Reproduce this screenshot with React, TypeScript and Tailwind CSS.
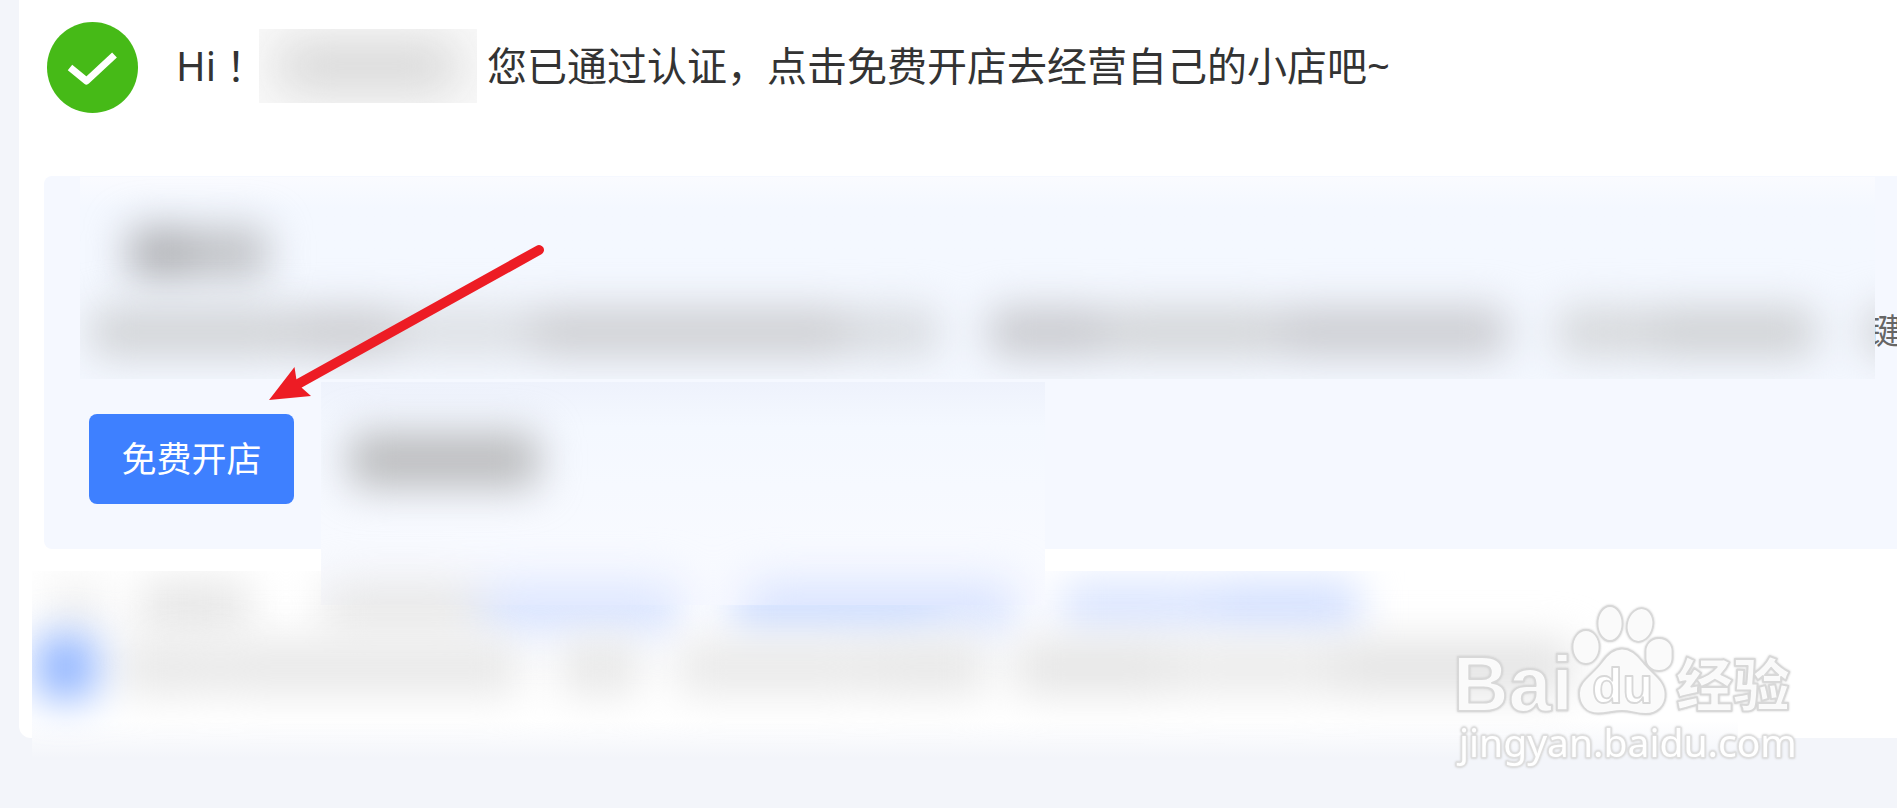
import React from 'react';

const Smudge = ({ className }: { className: string }) => (
  <span className={`block shrink-0 rounded-xl ${className}`} />
);

const SuccessIcon = () => (
  <svg viewBox="0 0 91 91" className="h-[91px] w-[91px] shrink-0" aria-hidden="true">
    <circle cx="45.5" cy="45.5" r="45.5" fill="#46ba17" />
    <path d="M23 45.500L39.500 59L67.500 33" fill="none" stroke="#fff" strokeWidth="7" strokeLinejoin="round" />
  </svg>
);

const Arrow = () => (
  <svg
    viewBox="0 0 290 170"
    className="pointer-events-none absolute left-[216px] top-16 z-20 h-[170px] w-[290px]"
    aria-hidden="true"
  >
    <path d="M279 10L38 144" stroke="#ed1c24" strokeWidth="10" strokeLinecap="round" />
    <path d="M9 160L34.500 127L36.500 140L42 148L51 156Z" fill="#ed1c24" />
  </svg>
);

const Watermark = () => (
  <svg
    viewBox="0 0 350 170"
    className="pointer-events-none absolute right-[97px] top-[600px] z-30 h-[170px] w-[350px] drop-shadow-[0_0_1px_#ccc]"
    fill="#fff"
    fillOpacity="0.9"
    stroke="#d8d8d8"
    strokeWidth="1.8"
    strokeLinejoin="round"
  >
    <text x="3" y="111" fontSize="77" fontWeight="700" fontFamily="'Liberation Sans', sans-serif">
      Bai
    </text>
    <ellipse cx="136" cy="47" rx="13.5" ry="17" />
    <ellipse cx="160" cy="23.500" rx="12.500" ry="17.500" />
    <ellipse cx="190" cy="25" rx="13" ry="17" transform="rotate(14 190 25)" />
    <rect x="195.500" y="38" width="27" height="33" rx="13" />
    <path d="M172 48.500C181 48.500 187 54 193 62C201 73 215 79 215.500 94C216 106 207 114 196 114C186 114 181 111 172 111C163 111 157 113.500 148 113.500C136 113.500 129 105 129 93C129 81 142 75 151 63C157 54 163 48.500 172 48.500Z" />
    <text x="142" y="103" fontSize="50" fontWeight="700" fontFamily="'Liberation Sans', sans-serif">
      du
    </text>
    <text x="226" y="106" fontSize="57" fontWeight="900" fontFamily="'Noto Sans CJK SC', sans-serif">
      经验
    </text>
    <g stroke="#dedede" strokeWidth="3" paintOrder="stroke" fillOpacity="1">
      <text x="9" y="157" fontSize="39" fontFamily="'Noto Sans', sans-serif">
        jingyan.baidu.com
      </text>
    </g>
  </svg>
);

export default function App() {
  return (
    <main className="relative min-h-screen overflow-hidden bg-[#f3f5fa] pl-[19px] font-['Noto_Sans','Noto_Sans_CJK_SC',sans-serif]">
      <section className="flow-root rounded-bl-xl bg-white">
        <header className="flex items-center pl-7 pt-[22px]">
          <SuccessIcon />
          <h1 className="ml-[38px] flex items-center whitespace-nowrap pb-1 text-[40px] leading-[74px] text-[#333]">
            <span className="font-['Noto_Sans','Noto_Sans_CJK_JP',sans-serif]">Hi！</span>
            <span className="ml-[3px] mr-2.5 flex h-[74px] w-[218px] items-center justify-center overflow-hidden bg-[#f9f9f9]">
              <Smudge className="h-12 w-[180px] bg-[#d6d6d6] blur-xl" />
            </span>
            <span>您已通过认证，点击免费开店去经营自己的小店吧~</span>
          </h1>
        </header>

        <div className="relative ml-[25px] mt-[63px] rounded-l-lg bg-[#f5f8ff] pb-[45px] pt-px">
          <div className="flex items-center pl-9">
            <div className="z-10 h-[202px] min-w-0 flex-1 overflow-hidden bg-linear-to-b from-[#fafbff] to-[#f4f8ff] to-15%">
              <div className="flex pl-12 pt-[50px] blur-[20px]">
                <Smudge className="h-[52px] w-[68px] bg-[#b0b1b5]" />
                <Smudge className="h-[52px] w-[72px] bg-[#c0c2c6]" />
              </div>
              <div className="flex pl-2.5 pt-[28px] blur-[20px]">
                <Smudge className="h-[50px] w-[200px] bg-[#d1d3d6]" />
                <Smudge className="h-[50px] w-[110px] bg-[#cdced2]" />
                <Smudge className="h-[50px] w-[130px] bg-[#dde0e5]" />
                <Smudge className="h-[50px] w-[320px] bg-[#cecfd3]" />
                <Smudge className="h-[50px] w-[90px] bg-[#d9dce1]" />
                <Smudge className="ml-12 h-[50px] w-[120px] bg-[#c9cacf]" />
                <Smudge className="h-[50px] w-[170px] bg-[#d3d5d8]" />
                <Smudge className="h-[50px] w-[230px] bg-[#cbccd1]" />
                <Smudge className="ml-12 h-[50px] w-[90px] bg-[#d6d8db]" />
                <Smudge className="h-[50px] w-[170px] bg-[#cfd1d4]" />
                <Smudge className="ml-12 h-[50px] w-20 bg-[#d2d3d6]" />
              </div>
            </div>
            <span className="-ml-2 w-[30px] shrink-0 overflow-hidden whitespace-nowrap pt-[106px] text-[35px] leading-[48px] text-[#666]">
              键
            </span>
          </div>

          <button
            type="button"
            className="ml-[45px] mt-[35px] h-[90px] w-[205px] rounded-lg bg-[#3e80ff] text-[35px] leading-[48px] text-white"
          >
            免费开店
          </button>

          <div className="absolute left-[277px] top-[206px] z-10 h-[223px] w-[724px] overflow-hidden bg-linear-to-b from-[#eef2fc] via-[#f4f8ff] via-20% to-[#fafbff]">
            <div className="pl-7 pt-[50px] blur-[20px]">
              <Smudge className="h-14 w-[190px] bg-[#bbbcbe]" />
            </div>
            <div className="flex pt-[96px] blur-[24px]">
              <Smudge className="h-14 w-[160px] bg-[#e6e6e6]" />
              <Smudge className="h-14 w-[200px] bg-[#dae4ff]" />
              <Smudge className="ml-16 h-14 w-[270px] bg-[#d6e1ff]" />
            </div>
          </div>
          <Arrow />
        </div>

        <div className="-mb-5 ml-[13px] mr-[159px] mt-[22px] h-[187px] overflow-hidden bg-linear-to-b from-white from-80% to-[#f3f5fa]">
          <div className="flex pl-4 pt-2 blur-[20px]">
            <Smudge className="h-14 w-14 bg-[#f2f2f2]" />
            <Smudge className="ml-9 h-14 w-[110px] bg-[#e8e8e8]" />
            <Smudge className="ml-[72px] h-14 w-[160px] bg-[#eaeaea]" />
            <Smudge className="h-14 w-[200px] bg-[#dae5ff]" />
            <Smudge className="ml-12 h-14 w-[210px] bg-[#d0dfff]" />
            <Smudge className="h-14 w-[80px] bg-[#dde7ff]" />
            <Smudge className="ml-10 h-14 w-[150px] bg-[#dde7ff]" />
            <Smudge className="h-14 w-[150px] bg-[#d6e2ff]" />
          </div>
          <div className="flex items-center pl-1 blur-[20px]">
            <Smudge className="h-16 w-[60px] bg-[#8eb3ff]" />
            <Smudge className="ml-6 h-14 w-[100px] bg-[#e9e9e9]" />
            <Smudge className="h-14 w-[300px] bg-[#e9e9e9]" />
            <Smudge className="ml-10 h-14 w-20 bg-[#e8e8e8]" />
            <Smudge className="ml-9 h-14 w-[190px] bg-[#eaeaea]" />
            <Smudge className="h-14 w-[120px] bg-[#e8e8e8]" />
            <Smudge className="ml-7 h-14 w-[160px] bg-[#e6e6e6]" />
            <Smudge className="h-14 w-[160px] bg-[#ececec]" />
            <Smudge className="h-14 w-[240px] bg-[#e5e5e5]" />
          </div>
        </div>
      </section>
      <Watermark />
    </main>
  );
}
